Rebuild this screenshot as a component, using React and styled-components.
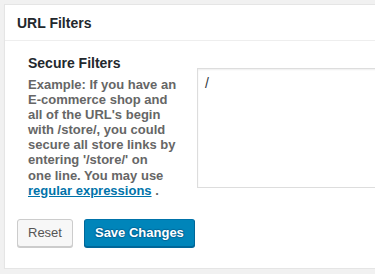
import React from "react";
import styled, { createGlobalStyle } from "styled-components";

const GlobalStyle = createGlobalStyle`
  html, body {
    margin: 0;
    padding: 0;
    background: #f1f1f1;
    overflow: hidden;
  }
  body {
    font-family: "Liberation Sans", Arial, sans-serif;
    color: #444;
  }
`;

const Page = styled.div`
  width: 460px;
  padding: 4px 0 0 4px;
`;

const Panel = styled.section`
  background: #fff;
  border: 1px solid #e5e5e5;
  box-shadow: 0 1px 1px rgba(0, 0, 0, 0.04);
`;

const PanelHeader = styled.h2`
  margin: 0;
  height: 35px;
  display: flex;
  align-items: center;
  padding: 0 12px;
  font-size: 14px;
  font-weight: bold;
  color: #23282d;
  border-bottom: 1px solid #eee;
`;

const PanelBody = styled.div`
  padding: 13px 12px 21px;
`;

const FieldRow = styled.div`
  display: flex;
  align-items: flex-start;
  padding-left: 11px;
`;

const LabelColumn = styled.div`
  width: 158px;
  flex: none;
`;

const FieldTitle = styled.div`
  font-size: 14px;
  font-weight: bold;
  line-height: 18px;
  color: #23282d;
`;

const Description = styled.p`
  margin: 5px 0 0;
  font-size: 13px;
  font-weight: bold;
  line-height: 15.1px;
  color: #666;
`;

const Link = styled.a`
  color: #0073aa;
  text-decoration: underline;
`;

const FieldInput = styled.textarea`
  margin: 14px 0 0 11px;
  width: 250px;
  height: 120px;
  box-sizing: border-box;
  flex: none;
  border: 1px solid #ddd;
  box-shadow: inset 0 1px 2px rgba(0, 0, 0, 0.07);
  padding: 5px 7px;
  font-family: "Liberation Sans", Arial, sans-serif;
  font-size: 14px;
  line-height: 1.4;
  color: #32373c;
  resize: none;
  outline: none;
  background: #fff;
`;

const Actions = styled.div`
  display: flex;
  gap: 11px;
  margin-top: 21px;
`;

const Button = styled.button`
  height: 28px;
  box-sizing: border-box;
  padding: 0 10px 1px;
  border-radius: 3px;
  border: 1px solid;
  font-family: "Liberation Sans", Arial, sans-serif;
  font-size: 13px;
  line-height: 26px;
  cursor: pointer;
  white-space: nowrap;
  background: ${(p) => (p.$primary ? "#0085ba" : "#f7f7f7")};
  border-color: ${(p) =>
    p.$primary ? "#0073aa #006799 #006799" : "#ccc"};
  box-shadow: 0 1px 0 ${(p) => (p.$primary ? "#006799" : "#ccc")};
  color: ${(p) => (p.$primary ? "#fff" : "#555")};
  font-weight: ${(p) => (p.$primary ? "bold" : "normal")};
  text-shadow: ${(p) =>
    p.$primary
      ? "0 -1px 1px #006799, 1px 0 1px #006799, 0 1px 1px #006799, -1px 0 1px #006799"
      : "none"};
`;

export default function App() {
  return (
    <>
      <GlobalStyle />
      <Page>
        <Panel>
          <PanelHeader>URL Filters</PanelHeader>
          <PanelBody>
            <FieldRow>
              <LabelColumn>
                <FieldTitle>Secure Filters</FieldTitle>
                <Description>
                  Example: If you have an
                  <br />
                  E-commerce shop and
                  <br />
                  all of the URL's begin
                  <br />
                  with /store/, you could
                  <br />
                  secure all store links by
                  <br />
                  entering '/store/' on
                  <br />
                  one line. You may use
                  <br />
                  <Link href="#">regular expressions</Link> .
                </Description>
              </LabelColumn>
              <FieldInput defaultValue="/" />
            </FieldRow>
            <Actions>
              <Button>Reset</Button>
              <Button $primary>Save Changes</Button>
            </Actions>
          </PanelBody>
        </Panel>
      </Page>
    </>
  );
}
